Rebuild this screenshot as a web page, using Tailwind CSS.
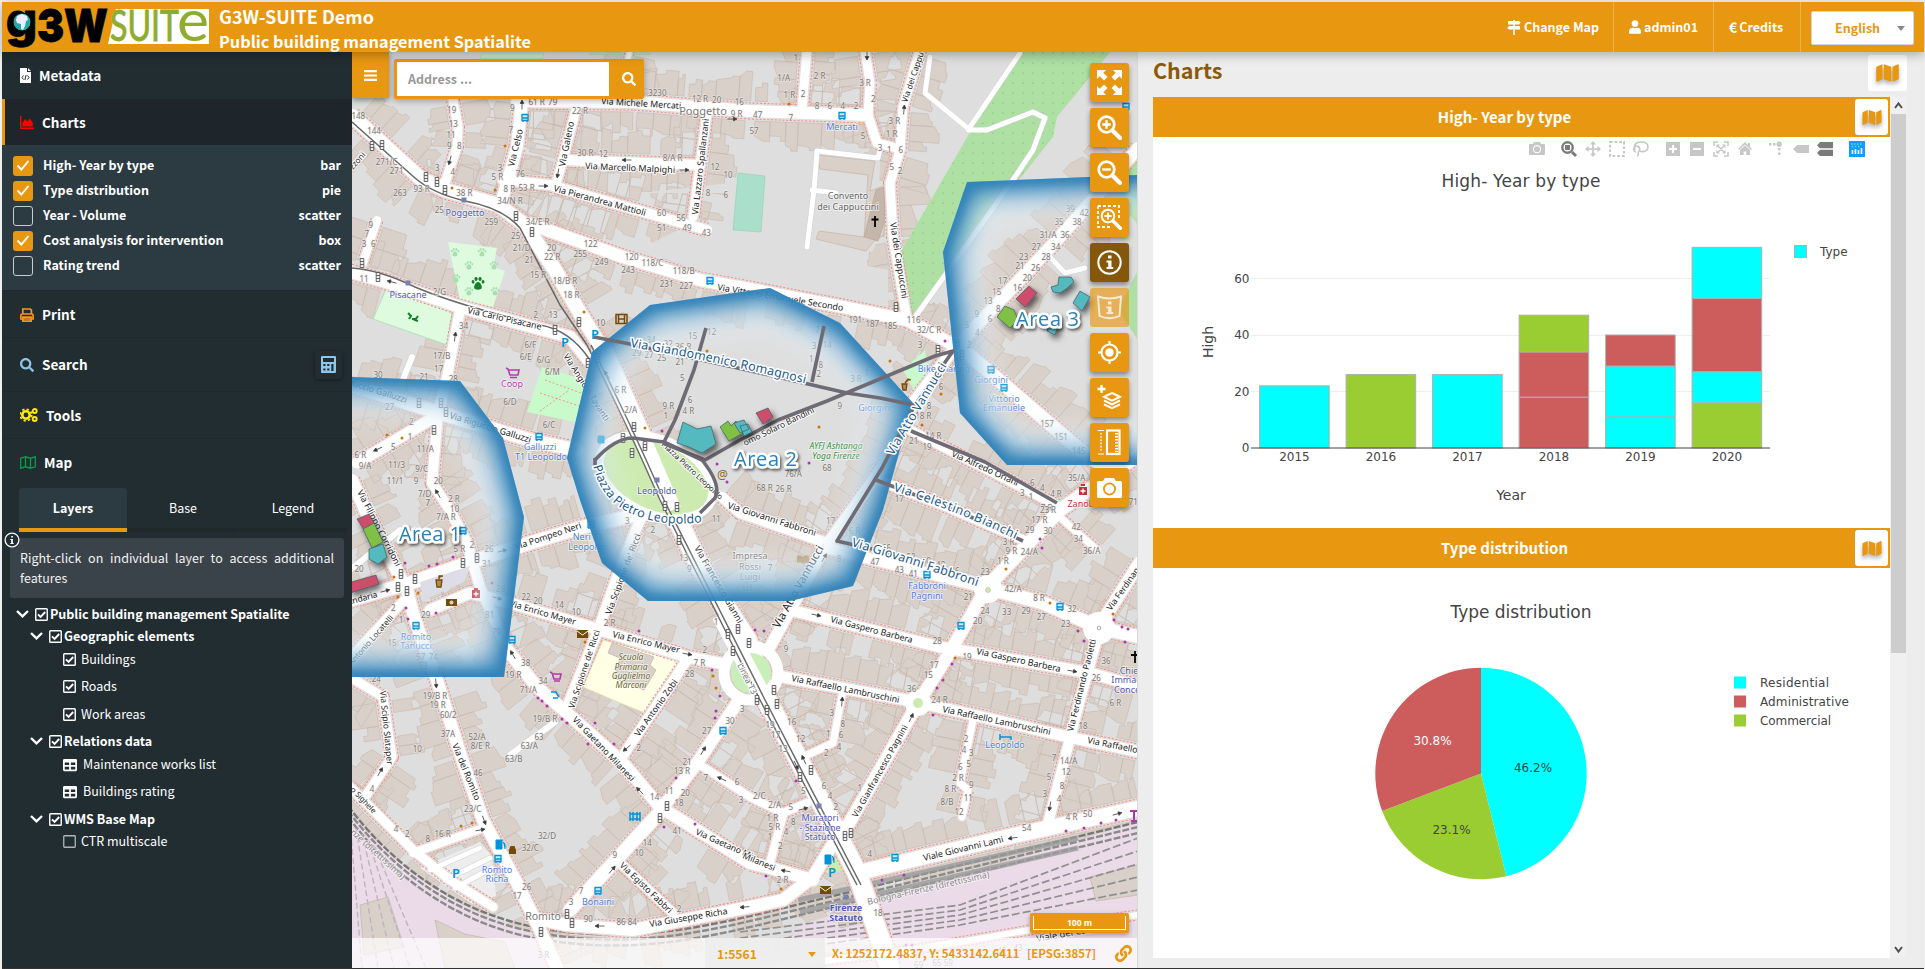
<!DOCTYPE html>
<html lang="en">
<head>
<meta charset="utf-8">
<title>G3W-SUITE Demo</title>
<script src="https://cdn.jsdelivr.net/npm/@tailwindcss/browser@4"></script>
</head>
<body class="w-[1925px] h-[969px] overflow-hidden bg-[#f0f0f0] pt-[2px] pl-[2px] pr-[1px] font-['Noto_Sans_CJK_SC','Source_Sans_Pro',sans-serif] text-[12.5px] text-white">
<svg width="0" height="0" class="absolute">
  <defs>
    <symbol id="i-search" viewBox="0 0 512 512"><path d="M505 442.7L405.3 343c-4.5-4.5-10.6-7-17-7H372c27.6-35.3 44-79.7 44-128C416 93.1 322.9 0 208 0S0 93.1 0 208s93.1 208 208 208c48.3 0 92.7-16.4 128-44v16.3c0 6.4 2.5 12.5 7 17l99.7 99.7c9.4 9.4 24.6 9.4 33.9 0l28.3-28.3c9.4-9.4 9.4-24.6.1-34zM208 336c-70.7 0-128-57.2-128-128 0-70.7 57.2-128 128-128 70.7 0 128 57.2 128 128 0 70.7-57.2 128-128 128z"/></symbol>
    <symbol id="i-user" viewBox="0 0 448 512"><path d="M224 256c70.7 0 128-57.3 128-128S294.7 0 224 0 96 57.3 96 128s57.3 128 128 128zm89.600 32h-16.700c-22.200 10.200-46.900 16-72.900 16s-50.600-5.800-72.900-16h-16.700C60.200 288 0 348.200 0 422.400V464c0 26.500 21.500 48 48 48h352c26.500 0 48-21.500 48-48v-41.600c0-74.200-60.200-134.400-134.400-134.400z"/></symbol>
    <symbol id="i-map" viewBox="0 0 576 512"><path d="M0 117.660v346.320c0 11.320 11.430 19.060 21.940 14.860L160 416V32L20.120 87.950A32 32 0 0 0 0 117.660zM192 416l192 64V96L192 32v384zM554.060 33.160L416 96v384l139.880-55.950A32 32 0 0 0 576 394.340V48.020c0-11.320-11.430-19.060-21.940-14.860z"/></symbol>
    <symbol id="i-table" viewBox="0 0 512 512"><path d="M464 32H48C21.490 32 0 53.490 0 80v352c0 26.510 21.490 48 48 48h416c26.510 0 48-21.490 48-48V80c0-26.510-21.490-48-48-48zM224 416H64v-96h160v96zm0-160H64v-96h160v96zm224 160H288v-96h160v96zm0-160H288v-96h160v96z"/></symbol>
    <symbol id="i-link" viewBox="0 0 512 512"><path d="M326.612 185.391c59.747 59.809 58.927 155.698.36 214.590-.11.12-.24.25-.36.37l-67.200 67.200c-59.270 59.270-155.699 59.262-214.960 0-59.270-59.260-59.270-155.700 0-214.960l37.106-37.106c9.840-9.840 26.786-3.300 27.294 10.606.648 17.722 3.826 35.527 9.690 52.721 1.986 5.822.567 12.262-3.783 16.612l-13.087 13.087c-28.026 28.026-28.905 73.660-1.155 101.960 28.024 28.579 74.086 28.749 102.325.51l67.200-67.190c28.191-28.191 28.073-73.757 0-101.830-3.701-3.694-7.429-6.564-10.341-8.569a16.037 16.037 0 0 1-6.947-12.606c-.396-10.567 3.348-21.456 11.698-29.806l21.054-21.055c5.521-5.521 14.182-6.199 20.584-1.731a152.482 152.482 0 0 1 20.522 17.197zM467.547 44.449c-59.261-59.262-155.690-59.270-214.960 0l-67.200 67.200c-.12.12-.25.25-.36.37-58.566 58.892-59.387 154.781.36 214.590a152.454 152.454 0 0 0 20.521 17.196c6.402 4.468 15.064 3.789 20.584-1.731l21.054-21.055c8.350-8.350 12.094-19.239 11.698-29.806a16.037 16.037 0 0 0-6.947-12.606c-2.912-2.005-6.640-4.875-10.341-8.569-28.073-28.073-28.191-73.639 0-101.830l67.200-67.190c28.239-28.239 74.300-28.069 102.325.51 27.750 28.300 26.872 73.934-1.155 101.960l-13.087 13.087c-4.350 4.350-5.769 10.790-3.783 16.612 5.864 17.194 9.042 34.999 9.690 52.721.509 13.906 17.454 20.446 27.294 10.606l37.106-37.106c59.271-59.259 59.271-155.699.001-214.959z"/></symbol>
    <symbol id="i-on" viewBox="0 0 13 13"><rect x=".75" y=".75" width="11.500" height="11.500" rx=".8" fill="none" stroke="currentColor" stroke-width="1.400"/><path d="M3 6.300l2.600 2.600L10.200 4" fill="none" stroke="currentColor" stroke-width="1.900"/></symbol>
    <symbol id="i-off" viewBox="0 0 13 13"><rect x=".75" y=".75" width="11.500" height="11.500" rx=".8" fill="none" stroke="currentColor" stroke-width="1.300"/></symbol>
    <symbol id="i-chev" viewBox="0 0 13 8"><path d="M1 1l5.500 5.300L12 1" fill="none" stroke="currentColor" stroke-width="2.400"/></symbol>
    <symbol id="i-tick" viewBox="0 0 14 11"><path d="M1.500 5.500l3.800 4L12.500 1" fill="none" stroke="#fff" stroke-width="1.900"/></symbol>
    <symbol id="i-cam" viewBox="0 0 25 20"><path d="M8 0h9l2 3h4.500A1.500 1.500 0 0 1 25 4.500v14a1.500 1.500 0 0 1-1.500 1.500h-22A1.500 1.500 0 0 1 0 18.500v-14A1.500 1.500 0 0 1 1.500 3H6z"/><circle cx="12.500" cy="11" r="5.600" fill="none" stroke="var(--hole)" stroke-width="1.800"/></symbol>
  </defs>
</svg>

<!-- header -->
<header class="relative z-30 flex h-[50px] items-stretch bg-[#e89711] shadow-[0_3px_10px_rgba(0,0,0,0.28)]">
  <svg class="ml-[4px] shrink-0" width="206" height="50" viewBox="6 2 206 50">
    <path d="M116 9H209V44H108z" fill="#fff"/>
    <g font-family="Inter" font-weight="900" fill="#000" stroke="#000" stroke-width=".8">
      <text x="6" y="37" font-size="47" textLength="31" lengthAdjust="spacingAndGlyphs">g</text>
      <text x="37" y="42" font-size="46" textLength="71" lengthAdjust="spacingAndGlyphs">3W</text>
    </g>
    <circle cx="22" cy="22" r="9" fill="#22a9a8" stroke="#000" stroke-width="1"/>
    <path d="M17 16l5-2 5 2 1 4-2 1-1 5-2 4-2-1 0-5-4-1-1-3z" fill="#eef"/>
    <g font-family="Lato" fill="#90ac2e" stroke="#90ac2e" stroke-width=".9">
      <text x="110" y="41" font-size="43" textLength="69" lengthAdjust="spacingAndGlyphs">SUIT</text>
      <text x="177" y="41" font-size="59" textLength="32" lengthAdjust="spacingAndGlyphs" stroke="none">e</text>
    </g>
  </svg>
  <div class="ml-[7px] flex flex-col whitespace-nowrap font-bold">
    <span class="text-[18px] leading-[29px]">G3W-SUITE Demo</span>
    <span class="text-[16.300px] leading-[21px]">Public building management Spatialite</span>
  </div>
  <nav class="ml-auto flex font-bold leading-[50px]">
    <div class="flex w-[121px] items-center gap-[3px] border-r border-white/25 pl-[14px]">
      <svg width="14" height="15" viewBox="0 0 14 15" fill="#fff"><path d="M6.200 0h1.600v1H12l1.700 1.700L12 4.500H1V1h5.200zM2 6h11v3.500H2L.3 7.800zM6.200 4h1.600v11H6.200z"/></svg>Change Map</div>
    <div class="flex w-[100px] items-center gap-[3px] border-r border-white/25 pl-[15px]">
      <svg width="12" height="14" fill="#fff"><use href="#i-user"/></svg>admin01</div>
    <div class="flex w-[87px] items-center gap-[2px] border-r border-white/25 pl-[15px]">
      <span class="text-[14px]">€</span>Credits</div>
    <div class="mt-[9px] ml-[10px] mr-[10px] flex h-[34px] w-[103px] items-center rounded-[2px] border border-[#d2d6de] bg-white pl-[23px] text-[#e89711] leading-[32px]">English
      <svg class="ml-[17px]" width="8" height="5"><path d="M0 0h8L4 5z" fill="#888"/></svg></div>
  </nav>
</header>

<div class="flex h-[916px]">
  <!-- sidebar -->
  <aside class="relative h-full w-[350px] shrink-0 bg-[#222d32]">
    <div class="flex h-[47px] items-center gap-[8px] pl-[18px] text-[13.500px] font-bold">
      <svg width="11" height="15" viewBox="0 0 11 15"><path d="M0 0h7v4h4v11H0zM8 0l3 3H8z" fill="#fff"/><path d="M3.500 7.500L2 9.500l1.500 2M7.500 7.500l1.500 2-1.500 2M6.100 7l-1.200 5" fill="none" stroke="#222d32"/></svg>
      <span>Metadata</span></div>
    <div class="flex h-[46px] items-center gap-[8px] border-l-[3px] border-[#e89711] bg-[#1e252b] pt-[1px] pl-[15px] text-[13.500px] font-bold">
      <svg width="14" height="13" viewBox="0 0 14 13"><path d="M0 0h1.400v11.400H14V13H0zM2.400 10.500V7l2.600-4 2.400 2.600 2.300-3 3 4v3.900z" fill="#f00"/></svg>
      <span>Charts</span></div>
    <div class="flex h-[145px] flex-col bg-[#2c3b41] pt-[8px] pr-[11px] pl-[11px] font-bold">
      <div class="flex h-[25px] items-center"><span class="mr-[10px] flex size-5 items-center justify-center rounded-[3px] bg-[#e89711]"><svg width="14" height="11"><use href="#i-tick"/></svg></span>High- Year by type<span class="ml-auto">bar</span></div>
      <div class="flex h-[25px] items-center"><span class="mr-[10px] flex size-5 items-center justify-center rounded-[3px] bg-[#e89711]"><svg width="14" height="11"><use href="#i-tick"/></svg></span>Type distribution<span class="ml-auto">pie</span></div>
      <div class="flex h-[25px] items-center"><span class="mr-[10px] size-5 rounded-[3px] border border-[#c8cdd0]"></span>Year - Volume<span class="ml-auto">scatter</span></div>
      <div class="flex h-[25px] items-center"><span class="mr-[10px] flex size-5 items-center justify-center rounded-[3px] bg-[#e89711]"><svg width="14" height="11"><use href="#i-tick"/></svg></span>Cost analysis for intervention<span class="ml-auto">box</span></div>
      <div class="flex h-[25px] items-center"><span class="mr-[10px] size-5 rounded-[3px] border border-[#c8cdd0]"></span>Rating trend<span class="ml-auto">scatter</span></div>
    </div>
    <div class="flex h-[48px] items-center gap-[8px] border-y border-[#1f282c] pl-[18px] pt-[1px] text-[13.500px] font-bold">
      <svg width="14" height="14" viewBox="0 0 14 14"><path d="M2.800 6V1h7.400l1.200 1.200V6M.9 11V7.500Q.9 6 2.200 6h9.600q1.300 0 1.300 1.500V11zM2.900 9.200h8.200v4H2.900z" fill="none" stroke="#f8961d" stroke-width="1.700"/></svg>
      <span>Print</span></div>
    <div class="flex h-[54px] items-center gap-[8px] border-b border-[#1f282c] pl-[18px] text-[13.500px] font-bold">
      <svg width="14" height="14" fill="#8fc5e8"><use href="#i-search"/></svg>
      <span>Search</span>
      <span class="mr-[10px] ml-auto flex h-[28px] w-[27px] items-center justify-center rounded-[3px] shadow-[0_1px_4px_rgba(0,0,0,0.45)]"><svg width="15" height="17" viewBox="0 0 15 17"><path fill-rule="evenodd" d="M1 0h13q1 0 1 1v15q0 1-1 1H1q-1 0-1-1V1q0-1 1-1zM2 2v4h11V2zM2.300 8h2.200v2H2.300zM6.200 8h2.200v2H6.200zM10.300 8h2.200v7h-2.200zM2.300 12.500h2.200v2H2.300zM6.200 12.500h2.200v2H6.200z" fill="#8fc5e8"/></svg></span></div>
    <div class="flex h-[47px] items-center gap-[8px] border-b border-[#1f282c] pl-[18px] text-[13.500px] font-bold">
      <svg width="18" height="14" viewBox="0 0 18 14" fill="none" stroke="#fde910"><circle cx="6" cy="7" r="3.700" stroke-width="2.600"/><circle cx="6" cy="7" r="5.800" stroke-width="1.700" stroke-dasharray="2.300 2.250"/><circle cx="14.700" cy="3" r="2" stroke-width="1.900"/><circle cx="14.700" cy="11" r="2" stroke-width="1.900"/></svg>
      <span>Tools</span></div>
    <div class="flex h-[47px] items-center gap-[8px] pl-[18px] text-[13.500px] font-bold">
      <svg width="16" height="13" viewBox="0 0 16 13"><path d="M.7 2.200L5.500.8l5 1.400L15.300.8v10l-4.800 1.400-5-1.400-4.800 1.400zM5.500.8v10M10.500 2.200v10" fill="none" stroke="#0a9b4c" stroke-width="1.300"/></svg>
      <span>Map</span></div>
    <div class="mt-[2px] ml-[17px] flex h-[44px] w-[328px] gap-[1px] text-center leading-[40px]">
      <div class="w-[108px] rounded-t-[4px] border-b-4 border-[#e89711] bg-[#2c3b41] font-bold">Layers</div>
      <div class="w-[110px] border-b-4 border-[#1f282b]">Base</div>
      <div class="w-[108px] border-b-4 border-[#1f282b]">Legend</div>
    </div>
    <div class="relative mt-[6px] ml-[8px] h-[60px] w-[334px] rounded-[3px] bg-[#3a434a] px-[10px] pt-[10px] text-justify leading-[20px] text-[#f2f2f2]">Right-click on individual layer to access additional features
      <svg class="absolute -top-[6px] -left-[6px]" width="16" height="16" viewBox="0 0 16 16"><circle cx="8" cy="8" r="6.900" fill="#222d32" stroke="#fff" stroke-width="1.300"/><path d="M7.200 4h1.700v1.600H7.200zM6.300 7h2.600v4h.8v1H6.300v-1h.9V8h-.9z" fill="#fff"/></svg>
    </div>
    <div class="flex flex-col whitespace-nowrap pt-[5px]">
      <div class="flex h-[22px] items-center pl-[14px] font-bold"><svg class="mr-[6px]" width="13" height="8"><use href="#i-chev"/></svg><svg class="mr-[2px]" width="13" height="13"><use href="#i-on"/></svg>Public building management Spatialite</div>
      <div class="flex h-[22px] items-center pl-[28px] font-bold"><svg class="mr-[6px]" width="13" height="8"><use href="#i-chev"/></svg><svg class="mr-[2px]" width="13" height="13"><use href="#i-on"/></svg>Geographic elements</div>
      <div class="flex h-[25px] items-center pl-[61px]"><svg class="mr-[5px]" width="13" height="13"><use href="#i-on"/></svg>Buildings</div>
      <div class="flex h-[28px] items-center pl-[61px]"><svg class="mr-[5px]" width="13" height="13"><use href="#i-on"/></svg>Roads</div>
      <div class="flex h-[28px] items-center pl-[61px]"><svg class="mr-[5px]" width="13" height="13"><use href="#i-on"/></svg>Work areas</div>
      <div class="flex h-[26px] items-center pl-[28px] font-bold"><svg class="mr-[6px]" width="13" height="8"><use href="#i-chev"/></svg><svg class="mr-[2px]" width="13" height="13"><use href="#i-on"/></svg>Relations data</div>
      <div class="flex h-[21px] items-center pl-[61px]"><svg class="mr-[6px]" width="14" height="14" fill="#fff"><use href="#i-table"/></svg>Maintenance works list</div>
      <div class="flex h-[33px] items-center pl-[61px]"><svg class="mr-[6px]" width="14" height="14" fill="#fff"><use href="#i-table"/></svg>Buildings rating</div>
      <div class="flex h-[22px] items-center pl-[28px] font-bold"><svg class="mr-[6px]" width="13" height="8"><use href="#i-chev"/></svg><svg class="mr-[2px]" width="13" height="13"><use href="#i-on"/></svg>WMS Base Map</div>
      <div class="flex h-[22px] items-center pl-[61px]"><svg class="mr-[5px] text-[#b0b5b8]" width="13" height="13"><use href="#i-off"/></svg>CTR multiscale</div>
    </div>
  </aside>

  <!-- map -->
  <main class="relative h-full w-[785px] shrink-0 overflow-hidden bg-[#dedede]">
    <svg id="map" class="absolute inset-0" width="786" height="916" viewBox="352 52 786 916" font-family="Noto Sans">
      <defs>
        <filter id="blur" x="-30%" y="-30%" width="160%" height="160%"><feGaussianBlur stdDeviation="13"/></filter>
        <filter id="drop" x="-50%" y="-50%" width="200%" height="200%"><feDropShadow dx="3" dy="4" stdDeviation="3" flood-opacity=".6"/></filter>
        <pattern id="dots" width="10" height="10" patternUnits="userSpaceOnUse"><rect width="10" height="10" fill="#aedfa3"/><circle cx="3" cy="3" r=".5" fill="#5f9b5d"/></pattern>
      </defs>
      <g id="buildings" fill="#d9d0c9" stroke="#c8b9ae" stroke-width=".6"></g>
      <g id="greens">
        <path d="M1020 50H1112L1057 117 1053 137 910 317 902 250 973 127z" fill="url(#dots)"/>
        <path d="M1138 155l-30 30 30 40zM1138 270l-20 40 20 30z" fill="#aedfa3"/>
        <path d="M738 173l27 3-4 56-28-2z" fill="#aae0cb" stroke="#8fd0b5" stroke-width=".6"/>
        <path d="M448 242l49 6-4 19 12 4-12 36-33-7z" fill="#defbe0"/>
        <path d="M387 287l65 25-5 33-74-26z" fill="#defbe0" stroke="#9fdca4" stroke-width=".7"/>
        <path d="M542 367l44 13-6 43-53-11z" fill="#c8facc"/>
        <path d="M545 380l36 13M540 393l42 14M540 411l28-20" stroke="#fa8072" stroke-width=".8" stroke-dasharray="2 2"/>
        <path d="M482 53h62l-2 6h-62zM590 53h60v1.500h-60z" fill="#c8efcf" stroke="#a9d9b3" stroke-width=".6"/>
        <path d="M603 640l77 20-35 53-25-10-37-16z" fill="#ffffe5" stroke="#e0d9a0" stroke-width=".7"/>
        <path d="M612 643l42 14-4 8 6 5-12 20-30-12 6-20-12-5z" fill="#d9d0c9" stroke="#c4b3a7" stroke-width=".7"/>
        <path d="M352 812C390 862 450 912 545 935L560 968H352z" fill="#ebdbe8"/>
        <path d="M800 925L1138 822V968H770z" fill="#ebdbe8"/>
        <path d="M1090 877l48-12v30l-42 6zM836 914l40-12 4 16-40 10zM360 905l28-8 16 50-40 8zM435 920l30 14 40 8 10 26h-70z" fill="#d9d0c9" stroke="#c4b3a7" stroke-width=".7"/>
        <path d="M420 868l60-26 12 14 4 40-24 8z" fill="#ededed"/>
        <path d="M640 193h90v-10zM738 240l150 30 0 40-190-40-60-20 40-20z" fill="#dedede"/>
        <path d="M830 150l50 10-2 80-6 12-58-12 3-55z" fill="#dedede"/>
        <path d="M817 155l58 6-5 30 16-6-2 50-10 6-8 10-50-12 3-8 45 6 4-62-48-6z" fill="#d9d0c9" stroke="#c4b3a7" stroke-width=".7"/>
        <path d="M876 190l9-3-1 36-6 18-14-4z" fill="#c4b6ab" stroke="#b3a293" stroke-width=".6"/>
        <path d="M925 350l-22 20 15 28 12-3z" fill="#c8facc"/>
        <path d="M825 848l18 0 6 22-28 4z" fill="#cdebb0"/>
        <path d="M519 226l6 0 50 84-5 4z" fill="#c5e8a8"/>
      </g>
      <g id="rails" fill="none"></g>
      <g id="streets" fill="none" stroke-linejoin="round" stroke-linecap="round"></g>
      <g fill="none">
        <ellipse cx="656" cy="477" rx="60" ry="37" transform="rotate(24 656 477)" fill="#cdebb0" stroke="#fff" stroke-width="9"/>
        <path d="M603 350L640 433 673 510" stroke="#fff" stroke-width="17"/>
        <circle cx="751" cy="673" r="27" stroke="#fff" stroke-width="11"/><circle cx="751" cy="673" r="20" fill="#c8efb8"/>
        <path d="M720 615l50 95" stroke="#fff" stroke-width="17"/>
        <circle cx="918" cy="703" r="13" fill="#fff"/><circle cx="918" cy="703" r="5" fill="#cdebb0"/>
        <circle cx="988" cy="589" r="14" fill="#fff"/><circle cx="988" cy="590" r="2.500" fill="#cdebb0" stroke="#aaa" stroke-width=".5"/>
        <circle cx="1099" cy="628" r="16" fill="#fff"/><circle cx="1099" cy="628" r="1.800" stroke="#888" stroke-width=".7"/>
        <path d="M420 582l50-16-6 16-40 18z" fill="#dddde8"/>
        <path d="M352 122L415 178Q432 193 465 201 503 208 520 228L560 305 587 345M352 268Q380 270 415 287 460 306 540 325 570 330 590 360" stroke="#666" stroke-width="1.500"/>
        <path d="M587 345Q625 420 660 500L760 700 857 885M591 345Q629 420 664 500L764 698 861 885" stroke="#6b6b6b" stroke-width="1.500"/>
      </g>
      <g id="numbers" font-size="8" fill="#7d7671" text-anchor="middle" stroke="#eee" stroke-opacity=".6" stroke-width="1.500" paint-order="stroke"></g>
      <g id="names" fill="#222" stroke="#fff" stroke-width="2" paint-order="stroke" stroke-linejoin="round"></g>
      <g id="signals" fill="none" stroke="#444" stroke-width=".8"></g>
      <g id="pins"></g>
      <g id="places" font-size="9" text-anchor="middle" stroke="#fff" stroke-opacity=".7" stroke-width="1.500" paint-order="stroke"></g>
      <g id="zones"></g>
      <g fill="none" stroke="#6f6b75" stroke-width="3.600" stroke-linejoin="round">
        <path d="M594 337L630 344 760 373 847 393 880 398 914 405M706 328L694 370 675 420 664 442M824 326L812 382M663 443L705 460 740 440 778 420 827 401 935 356 953 351 915 405 882 468 837 541 890 553M595 460Q615 438 633 438L664 442 702 460Q722 485 715 498L700 513M595 458V465M911 431L985 462 1057 503M876 480L960 512 1023 541"/>
      </g>
      <g filter="url(#drop)" stroke="#3c5b60" stroke-width=".7">
        <path d="M683 422l14 7 14-3 5 18-14 9-13-6-12-4z" fill="#54b9c0"/>
        <path d="M720 427l8-6 3 5 5-5 7 12-14 8z" fill="#7fc044"/><path d="M734 423l10-3 5 9-9 4zM740 426l8-2 4 8-8 4z" fill="#54b9c0"/>
        <path d="M756 413l12-5 5 9-10 7z" fill="#ce4e6d"/>
        <path d="M357 519l12-5 5 9-10 7z" fill="#ce4e6d"/><path d="M363 529l11-6 9 19-11 6z" fill="#7fc044"/><path d="M369 549l14-5 4 13-9 7-9-5z" fill="#54b9c0"/>
        <path d="M348 583l28-8 3 9-29 9z" fill="#ce4e6d"/>
        <path d="M1016 299l13-13 8 7-12 14z" fill="#ce4e6d"/><path d="M997 317l8-11 9 4 4 10-8 8z" fill="#7fc044"/>
        <path d="M1051 287l7-2 1-8 12 0 3 5-8 7-6 4-7-1z" fill="#54b9c0"/><path d="M1073 303l7-12 10 6-8 14zM1048 325l5-7 6 5-4 12-8-4z" fill="#54b9c0"/>
      </g>
      <g id="tops" fill="#1d5a8a" stroke="#fff" stroke-width="3" paint-order="stroke" stroke-linejoin="round"></g>
      <g font-family="Open Sans, Noto Sans" font-size="20" font-weight="500" fill="#2b80bd" stroke="#fff" stroke-width="5" paint-order="stroke" stroke-linejoin="round" filter="url(#lbl)">
        <text x="399" y="541" textLength="62">Area 1</text><text x="734" y="466" textLength="63">Area 2</text><text x="1016" y="326" textLength="63">Area 3</text>
      </g>
    </svg>

    <div class="absolute top-0 left-0 flex h-[46px] w-[37px] items-center justify-center bg-[#e89711] shadow-[0_2px_6px_rgba(0,0,0,0.45)]">
      <svg width="13" height="11"><path d="M0 1.200h13M0 5.500h13M0 9.800h13" stroke="#fff" stroke-width="2.200"/></svg></div>
    <div class="absolute top-[7px] left-[42px] flex h-[40px] w-[250px] items-center rounded-[2px] border-[3px] border-[#e89711] bg-[#e89711] shadow-[0_2px_6px_rgba(0,0,0,0.3)]">
      <div class="h-[34px] w-[212px] bg-white pl-[11px] text-[12.500px] leading-[34px] font-bold text-[#999]">Address ...</div>
      <svg class="ml-[13px]" width="14" height="14" fill="#fff"><use href="#i-search"/></svg>
    </div>

    <div class="absolute top-[11px] left-[738px] flex flex-col gap-[6px] [--hole:#e89711]">
      <div class="flex size-[39px] items-center justify-center rounded-[3px] bg-[#e89711] shadow-[0_3px_5px_rgba(0,0,0,0.4)]"><svg width="25" height="25" viewBox="0 0 25 25" fill="#fff"><path d="M0 0h9L6.300 2.700 10.500 7 7 10.500 2.700 6.300 0 9z"/><path d="M0 0h9L6.300 2.700 10.500 7 7 10.500 2.700 6.300 0 9z" transform="matrix(-1 0 0 1 25 0)"/><path d="M0 0h9L6.300 2.700 10.500 7 7 10.500 2.700 6.300 0 9z" transform="matrix(1 0 0 -1 0 25)"/><path d="M0 0h9L6.300 2.700 10.500 7 7 10.500 2.700 6.300 0 9z" transform="matrix(-1 0 0 -1 25 25)"/></svg></div>
      <div class="flex size-[39px] items-center justify-center rounded-[3px] bg-[#e89711] shadow-[0_3px_5px_rgba(0,0,0,0.4)]"><svg width="25" height="25" viewBox="0 0 25 25" fill="none" stroke="#fff"><circle cx="9.500" cy="9.500" r="7.800" stroke-width="2.700"/><path d="M9.500 5.200v8.600M5.200 9.500h8.600" stroke-width="2.400"/><path d="M15.500 15.500L23 23" stroke-width="4.200" stroke-linecap="round"/></svg></div>
      <div class="flex size-[39px] items-center justify-center rounded-[3px] bg-[#e89711] shadow-[0_3px_5px_rgba(0,0,0,0.4)]"><svg width="25" height="25" viewBox="0 0 25 25" fill="none" stroke="#fff"><circle cx="9.500" cy="9.500" r="7.800" stroke-width="2.700"/><path d="M5.200 9.500h8.600" stroke-width="2.400"/><path d="M15.500 15.500L23 23" stroke-width="4.200" stroke-linecap="round"/></svg></div>
      <div class="flex size-[39px] items-center justify-center rounded-[3px] bg-[#e89711] shadow-[0_3px_5px_rgba(0,0,0,0.4)]"><svg width="25" height="25" viewBox="0 0 25 25" fill="none" stroke="#fff"><path d="M1 1h21v12M1 1v21h12" stroke-width="1.800" stroke-dasharray="3 2"/><circle cx="11" cy="11" r="6.300" stroke-width="2"/><path d="M11 7.500v7M7.500 11h7" stroke-width="1.900"/><path d="M16 16l7.300 7.300" stroke-width="3.600" stroke-linecap="round"/></svg></div>
      <div class="flex size-[39px] items-center justify-center rounded-[3px] bg-[#85570a] shadow-[0_3px_5px_rgba(0,0,0,0.4)]"><svg width="25" height="25" viewBox="0 0 25 25"><circle cx="12.500" cy="12.500" r="11.200" fill="none" stroke="#fff" stroke-width="2"/><path d="M11 5.500h3.500v3H11zM9.500 10.500h5v6.500h1.700v2H9.500v-2h1.700v-4.500H9.500z" fill="#fff"/></svg></div>
      <div class="flex size-[39px] items-center justify-center rounded-[3px] bg-[#e89711]/65"><svg class="opacity-75" width="25" height="25" viewBox="0 0 25 25"><path d="M1 1.500Q12.500 5.500 24 1.500L22.500 21Q12.500 25.500 2.500 21z" fill="none" stroke="#fff" stroke-width="1.900"/><path d="M11 6.500h3.500v3H11zM9.500 11.500h5V17h1.700v2H9.500v-2h1.700v-3.500H9.500z" fill="#fff"/></svg></div>
      <div class="flex size-[39px] items-center justify-center rounded-[3px] bg-[#e89711] shadow-[0_3px_5px_rgba(0,0,0,0.4)]"><svg width="25" height="25" viewBox="0 0 25 25" fill="none" stroke="#fff" stroke-width="2.200"><circle cx="12.500" cy="12.500" r="8"/><circle cx="12.500" cy="12.500" r="4.200" fill="#fff" stroke="none"/><path d="M12.500 1v4M12.500 20v4M1 12.500h4M20 12.500h4"/></svg></div>
      <div class="flex size-[39px] items-center justify-center rounded-[3px] bg-[#e89711] shadow-[0_3px_5px_rgba(0,0,0,0.4)]"><svg width="25" height="25" viewBox="0 0 25 25" fill="none" stroke="#fff" stroke-width="2"><path d="M4.500 0v8M.5 4h8" stroke-width="2.400"/><path d="M15 8l8 3.800-8 3.800-8-3.800zM7 15.500l8 3.800 8-3.800M7 19.300l8 3.800 8-3.800"/></svg></div>
      <div class="flex size-[39px] items-center justify-center rounded-[3px] bg-[#e89711] shadow-[0_3px_5px_rgba(0,0,0,0.4)]"><svg width="25" height="27" viewBox="0 0 25 27" fill="none" stroke="#fff"><rect x="10" y="1.500" width="12.500" height="23.500" stroke-width="2.200"/><path d="M19.500 4v19" stroke-width="3" stroke-dasharray="1.600 1.400"/><path d="M1 1.500h6M1 25h6" stroke-width="1.200"/><path d="M4 4v19" stroke-width="1.600" stroke-dasharray="1.600 1.600"/></svg></div>
      <div class="flex size-[39px] items-center justify-center rounded-[3px] bg-[#e89711] shadow-[0_3px_5px_rgba(0,0,0,0.4)]"><svg width="25" height="20" fill="#fff"><use href="#i-cam"/></svg></div>
    </div>

    <div class="absolute top-[861px] left-[678px] flex h-[20px] w-[99px] rounded-[2px] bg-[#e89711] p-[3px] shadow-[0_2px_5px_rgba(0,0,0,0.35)]"><div class="flex-1 border border-t-0 border-white text-center font-['Open_Sans',sans-serif] text-[8.500px] leading-[14px] font-bold">100 m</div></div>

    <div class="absolute bottom-0 left-0 flex h-[30px] w-full items-center bg-white/70 pl-[353px] text-[11.400px] font-bold whitespace-nowrap text-[#e89711]">
      <div class="flex h-full w-[120px] items-center bg-[#ededed]/90 pt-[2px] pl-[12px]"><span class="w-[91px] text-[12.200px]">1:5561</span><svg width="8" height="5"><path d="M0 0h8L4 5z" fill="#e89711"/></svg></div>
      <span class="ml-[7px] w-[195px] pt-[2px]">X: 1252172.4837, Y: 5433142.6411</span><span class="w-[88px] pt-[2px]">[EPSG:3857]</span>
      <svg width="17" height="17" fill="#e89711"><use href="#i-link"/></svg>
    </div>
  </main>

  <!-- charts panel -->
  <section class="h-full w-[787px] border-l border-[#d9d9d9] bg-[#ededed] pl-[15px]">
    <div class="flex h-[45px] items-start justify-between pr-[17px]">
      <h3 class="text-[21.500px] leading-[36px] font-bold text-[#8a5a0b]">Charts</h3>
      <div class="mt-[3px] flex h-[36px] w-[39px] items-center justify-center rounded-[3px] bg-white"><svg width="23" height="20" fill="#e89711" class="drop-shadow-[0_3px_2px_rgba(0,0,0,0.3)]"><use href="#i-map"/></svg></div>
    </div>
    <div class="flex h-[861px] w-[753px]">
      <div class="h-full w-[737px] bg-white">
        <div class="relative flex h-[40px] items-center justify-end bg-[#e89711] pr-[2px] text-[15px] font-bold"><span class="w-[702px] -mr-[0px] pl-[1px] text-center">High- Year by type</span>
          <span class="flex h-[36px] w-[33px] items-center justify-center rounded-[3px] bg-white"><svg width="20" height="17" fill="#e89711" class="drop-shadow-[0_3px_2px_rgba(0,0,0,0.3)]"><use href="#i-map"/></svg></span></div>
        <svg class="block" width="737" height="391" viewBox="1153 137 737 391" font-family="DejaVu Sans" font-size="12" fill="#444">
          <g fill="#c7c7c7" stroke="none" style="--hole:#fff">
            <svg x="1529" y="142" width="16" height="13"><use href="#i-cam"/></svg>
            <g fill="none" stroke="#7b7b7b"><circle cx="1567.500" cy="147.500" r="5.200" stroke-width="2.400"/><path d="M1572 152l4 4" stroke-width="3"/><rect x="1565" y="145" width="5" height="5" fill="#7b7b7b" stroke="none"/></g>
            <g fill="none" stroke="#c7c7c7" stroke-width="1.700"><path d="M1593 143v12M1587 149h12"/></g>
            <path d="M1593 141l3 3.500h-6zM1593 157l3-3.500h-6zM1585 149l3.500-3v6zM1601 149l-3.500-3v6z"/>
            <rect x="1610" y="142" width="14" height="14" fill="none" stroke="#c7c7c7" stroke-width="2" stroke-dasharray="2.600 2"/>
            <path d="M1636 152a3 3 0 1 1 3-1c6 2 9-1 9-4 0-4-3-5-7-5-5 0-8 3-6 8M1638 152c1 2 0 4-1 4" fill="none" stroke="#c7c7c7" stroke-width="1.600"/>
            <path d="M1666 142h14v14h-14zM1690 142h14v14h-14z"/><path d="M1669 149h8M1673 145v8M1693 149h8" stroke="#fff" stroke-width="2.200"/>
            <path d="M1714 146v-4h4M1724 142h4v4M1728 152v4h-4M1718 156h-4v-4M1717 145l8 8M1725 145l-8 8" fill="none" stroke="#c7c7c7" stroke-width="1.500"/><path d="M1716.500 144.500h3.500l-3.500 3.500zM1725.500 144.500v3.500l-3.500-3.500zM1725.500 153.500H1722l3.500-3.500zM1716.500 153.500V150l3.500 3.500z"/>
            <path d="M1738 149l7-7 3 3v-2h2v4l2 2-1 1-6-5.500-6 5.500zM1740 150l5-4.500 5 4.500v5h-3.700v-3.500h-2.600v3.500H1740z"/>
            <path d="M1769 143h2.500v2.500h-2.500zM1773 143h2.500v2.500h-2.500zM1778 148h2.500v2.500h-2.500zM1778 152.500h2.500v2.500h-2.500z"/><circle cx="1779.200" cy="144.200" r="2.600"/>
            <path d="M1793 149l4-4h12v8h-12z"/>
            <path d="M1817 145.500l3-3.500h13v6.200h-13zM1817 153l3-3.300h13v6.300h-13z" fill="#7b7b7b"/>
            <rect x="1849" y="141" width="16" height="16" fill="#119dff"/><path d="M1852.500 150v4M1855.500 149v5M1858.500 150v4M1861.500 148v6" stroke="#fff" stroke-width="1.600"/><path d="M1851 144h12M1852 146.500h9" stroke="#6df" stroke-width="1.300" stroke-dasharray="1.300 1.700"/>
          </g>
          <text x="1521" y="187" font-size="17" text-anchor="middle" textLength="159">High- Year by type</text>
          <path d="M1251 278.500h519M1251 335.500h519M1251 391.500h519" stroke="#eee"/>
          <g id="bars" stroke="#b0b0b0" stroke-width="1"></g>
          <path d="M1251 448h519" stroke="#444"/>
          <g text-anchor="end"><text x="1249.500" y="452">0</text><text x="1249.500" y="396">20</text><text x="1249.500" y="339">40</text><text x="1249.500" y="283">60</text></g>
          <text x="1511" y="500" font-size="14" text-anchor="middle">Year</text>
          <text transform="translate(1213 342) rotate(-90)" font-size="14" text-anchor="middle">High</text>
          <rect x="1794.500" y="245.500" width="12" height="12" fill="#0ff" stroke="#b0b0b0"/><text x="1820" y="256">Type</text>
        </svg>
        <div class="flex h-[40px] items-center justify-end bg-[#e89711] pr-[2px] text-[15px] font-bold"><span class="w-[702px] pl-[1px] text-center">Type distribution</span>
          <span class="flex h-[36px] w-[33px] items-center justify-center rounded-[3px] bg-white"><svg width="20" height="17" fill="#e89711" class="drop-shadow-[0_3px_2px_rgba(0,0,0,0.3)]"><use href="#i-map"/></svg></span></div>
        <svg class="block" width="737" height="390" viewBox="1153 568 737 390" font-family="DejaVu Sans" font-size="12" fill="#444">
          <text x="1521" y="618" font-size="17" text-anchor="middle" textLength="141">Type distribution</text>
          <g id="pie"></g>
          <text x="1533" y="772" text-anchor="middle">46.2%</text><text x="1432.500" y="745" text-anchor="middle" fill="#fff">30.8%</text><text x="1451.500" y="834" text-anchor="middle">23.1%</text>
          <path d="M1734 676.500h12v12h-12z" fill="#0ff"/><path d="M1734 695.500h12v12h-12z" fill="#cd5c5c"/><path d="M1734 714.500h12v12h-12z" fill="#9acd32"/>
          <text x="1760" y="687" textLength="69">Residential</text><text x="1760" y="706" textLength="89">Administrative</text><text x="1760" y="725" textLength="71">Commercial</text>
        </svg>
      </div>
      <div class="flex h-full w-[16px] flex-col bg-[#f0f0f0] pl-[1px]">
        <svg width="15" height="17"><path d="M4 11l3.500-4.500L11 11" fill="none" stroke="#505050" stroke-width="2"/></svg>
        <div class="h-[539px] bg-[#cdcdcd]"></div>
        <svg class="mt-auto" width="15" height="17"><path d="M4 6l3.500 4.500L11 6" fill="none" stroke="#505050" stroke-width="2"/></svg>
      </div>
    </div>
  </section>
</div>
<div class="h-[1px] bg-[#333]"></div>

<script>
const NS = 'http://www.w3.org/2000/svg';
const $ = id => document.getElementById(id);
function add(parent, tag, attrs, text) {
  const e = document.createElementNS(NS, tag);
  for (const k in attrs) e.setAttribute(k, attrs[k]);
  if (text !== undefined) e.textContent = text;
  parent.appendChild(e);
  return e;
}

/* stacked bars */
const C = '#00ffff', G = '#9acd32', R = '#cd5c5c';
[['2015', [[22, C]]], ['2016', [[26, G]]], ['2017', [[26, C]]],
 ['2018', [[18, R], [16, R], [13, G]]], ['2019', [[11, C], [18, C], [11, R]]],
 ['2020', [[16, G], [11, C], [26, R], [18, C]]]].forEach(([year, parts], i) => {
  let base = 0; const x = 1259.6 + i * 86.5;
  parts.forEach(([v, c]) => {
    add($('bars'), 'rect', {x, y: 448 - (base + v) * 2.826, width: 69.6, height: v * 2.826, fill: c});
    base += v;
  });
  add($('bars'), 'text', {x: x + 34.8, y: 461, 'text-anchor': 'middle', stroke: 'none'}, year);
});

/* pie */
let a0 = 0;
[[6 / 13, C], [3 / 13, G], [4 / 13, R]].forEach(([f, c]) => {
  const a1 = a0 + f * 2 * Math.PI, r = 105.7, cx = 1481, cy = 773.5;
  add($('pie'), 'path', {d: `M${cx} ${cy}L${cx + r * Math.sin(a0)} ${cy - r * Math.cos(a0)}A${r} ${r} 0 0 1 ${cx + r * Math.sin(a1)} ${cy - r * Math.cos(a1)}z`, fill: c});
  a0 = a1;
});

/* streets: width, then x,y pairs */
const streets = [
 [14,352,116,420,178,445,190,498,205,525,225,555,270,580,313,603,350],
 [12,530,224,623,257,700,280,750,289,843,307,907,320,950,343],
 [19,603,350,640,433,673,510,700,567,747,640,767,700,820,800,857,873,883,947,890,968],
 [12,350,272,383,281,460,307,540,329,570,337,590,362],
 [12,522,99,517,147,503,197],[9,453,100,458,127,457,147,445,183,430,185],[9,577,105,563,160,555,187],
 [12,517,101,633,102,683,106,750,111,867,115],[9,865,50,870,83,868,115,877,143,900,149],[9,802,110,807,50],
 [10,563,160,700,165],[9,707,113,693,217],[10,503,180,550,185,647,213,707,230],[8,377,220,363,263],
 [10,460,310,447,377,438,413,432,483,450,510,467,543,480,587,510,653],
 [13,350,385,440,413,530,440,577,450],[11,433,418,357,463],
 [12,352,480,365,510,407,590,413,613,423,643,437,680,460,753,483,820,517,883,540,930,557,968],
 [13,350,600,410,583,477,560,530,543,583,527,637,515],[9,407,597,350,658],
 [11,430,610,470,593,510,603,597,629,687,657,725,664],[10,650,500,637,527,617,577,597,633,567,707],
 [12,510,653,537,687,567,713,623,763,660,807,750,863,770,868,813,880],[10,687,660,620,760],
 [9,350,677,383,697,392,757,363,800],[9,350,787,413,850,450,880,493,907],[8,413,853,483,828],
 [9,620,863,673,913],[13,660,812,570,910],[12,537,919,567,925,633,930,750,907,783,900,813,877,843,827],
 [12,663,807,697,763,737,703],[8,697,763,750,797,783,813,807,803],[8,783,815,770,863],
 [11,770,647,823,550,883,467,913,403,953,350],[11,790,610,940,647,1090,673,1140,687],
 [12,987,587,947,657,918,703,847,827],[13,987,587,1060,510,1138,455],[13,987,588,1043,603,1100,628,1140,637],
 [11,823,547,987,588],[10,827,543,740,513,722,497],[9,877,480,947,507,1023,540],[9,910,430,1060,507],
 [11,783,677,917,702,1073,738,1140,752],[10,1100,628,1080,700,1047,827],[12,1100,625,1140,562],
 [15,857,873,1007,837,1140,808],[7,843,690,833,743,803,757],[7,973,720,960,783,968,790,962,817],[7,1063,520,1097,550],
 [9,920,50,903,107,900,150,890,183,893,237,907,320],[12,1138,148,1113,177,1057,240,963,340],
 [13,955,343,1007,387,1080,450,1110,470],[6,760,968,900,952,1030,930,1138,915],[5,630,50,618,105]];
const bare = [
 [5,817,152,814,190,807,247],[5,817,151,878,158,880,150],[5,812,190,836,193],
 [5,930,57,925,93,970,130,987,130,1033,112,1045,118,1033,150,1013,180,913,320],[5,968,130,1020,53],
 [5,1050,257,1065,273,1085,268],[5,430,870,480,848],[5,445,880,490,858],[5,455,888,492,868],[6,412,357,402,382],[6,510,755,555,722],[6,350,570,400,530]];
let seed = 11;
const rnd = () => (seed = (seed * 16807) % 2147483647) / 2147483647;
const d = s => { let p = 'M'; for (let i = 1; i < s.length; i += 2) p += (i > 1 ? 'L' : '') + s[i] + ' ' + s[i + 1]; return p; };

/* rows of houses along both sides of every street */
let rows = '';
streets.forEach(s => {
  for (let i = 1; i + 3 < s.length; i += 2) {
    const [x1, y1, x2, y2] = s.slice(i, i + 4), L = Math.hypot(x2 - x1, y2 - y1), ux = (x2 - x1) / L, uy = (y2 - y1) / L;
    for (const side of [-1, 1]) {
      const vx = -uy * side, vy = ux * side, o = s[0] / 2 + 4;
      for (let t = 5; t < L - 6;) {
        const w = Math.min(L - t, 10 + rnd() * 14), dep = 16 + rnd() * 15;
        if (rnd() > .1) {
          const q = (a, b) => (x1 + ux * a + vx * b).toFixed(1) + ' ' + (y1 + uy * a + vy * b).toFixed(1);
          const k = w * (.4 + rnd() * .3);
          rows += `M${q(t, o)}L${q(t + w, o)}L${q(t + w, o + dep)}L${q(t + k, o + dep)}L${q(t + k, o + dep - 5 * rnd())}L${q(t, o + dep - 5)}z`;
        }
        t += w;
      }
    }
  }
});
add($('buildings'), 'path', {d: rows});

/* railway */
const rl = $('rails');
[0, 5, 11].forEach((o, i) => add(rl, 'path', {d: `M348 ${806 + o}C395 ${868 + o} 460 ${915 + o} 545 ${929 + o} 640 ${944 + o} 710 ${926 + o} 800 ${904 + o}L1138 ${822 + o}`, stroke: i ? '#8a8a8a' : '#777', 'stroke-width': 2.4, 'stroke-dasharray': '7 2'}));
for (let i = 0; i < 5; i++) add(rl, 'path', {d: `M740 ${932 + i * 6}L960 ${905 + i * 5}L1138 ${838 + i * 13}`, stroke: '#8f8f8f', 'stroke-width': 1.7, 'stroke-dasharray': '8 3'});
for (let i = 0; i < 5; i++) add(rl, 'path', {d: `M${350 + i * 6} ${822 + i * 6}L${362 + i * 16} 968`, stroke: '#bfb3bf', 'stroke-width': 1.4, 'stroke-dasharray': '6 3'});
add(rl, 'path', {d: 'M798 900L1078 838M800 912L1078 848', stroke: '#9b9b9b', 'stroke-width': 5, opacity: .8});

const st = $('streets');
streets.forEach(s => add(st, 'path', {d: d(s), stroke: '#f58a80', 'stroke-width': s[0] + 5, 'stroke-dasharray': '2 1.8', 'stroke-linecap': 'butt'}));
streets.forEach(s => add(st, 'path', {d: d(s), stroke: '#e2dedc', 'stroke-width': s[0] + 3}));
bare.forEach(s => add(st, 'path', {d: d(s), stroke: '#cfcfcf', 'stroke-width': s[0] + 1}));
streets.concat(bare).forEach(s => add(st, 'path', {d: d(s), stroke: '#fff', 'stroke-width': s[0]}));

/* house numbers; coordinates are thirds of a pixel from the given origin */
function numbers(ox, oy, list) {
  list.split(';').forEach(n => { const [t, x, y] = n.split(','); add($('numbers'), 'text', {x: ox + x / 3, y: oy + y / 3 + 3}, t); });
}
numbers(350, 50, '148,25,198;144,72,243;19,305,180;13,310,222;11,303,256;9,298,289;8,328,289;271/C,110,335;271,140,362;3,262,353;4,308,365;263,150,428;93 R,215,418;38 R,343,428;25,268,480;259,424,515;9,62,525;7,50,553;3,42,582;6,70,582;11,42,688;2/G,268,725;61 R,560,155;79,608,157;9,487,175;22 R,690,182;3230,922,128;12 R,1050,147;20,1100,150;16,1168,156;9 R,1160,193;7,482,240;3,450,353;5 R,442,380;76,511,373;8 R,478,418;53 R,530,414;34/N R,480,452;30 R,706,309;12,760,311;8/A R,968,325;12,1095,352;10,1134,376;8,1074,429;6,1127,435;60,935,488;56,993,504;51,935,534;49,1011,534;43,1069,548;34/E R,563,515;25,497,558;21/D,515,594;21,538,629;20,605,594;22 R,607,622;122,722,582;255,691,612;249,755,636;243,834,661;120,845,622;118/C,907,638;118/B,1001,663;231,950,702;227,1008,708;15 R,564,675;18/B R,645,694;18 R,664,736;2,557,796;13,609,795;10,752,819;34,341,829;6/F,541,886;6/E,527,921;6/G,580,931;6/M,607,967;6/D,480,1055;6/C,597,1125;17/B,275,918;17,266,956;28,310,986;21,222,981;30,84,975;27,119,1072;2,184,1116;1,180,1161;5,130,1191;6 R,31,1216;9/A,45,1247;11/A,226,1198;11/3,140,1244;9/C,215,1258;11/1,135,1294;9,198,1294;20,265,1294;7/D,224,1332;7,232,1360;2 R,312,1347;34,903,870;32,955,883;36 R,1000,891;29,860,908;27,897,915;25,935,925;21,990,937;12,1085,846;15,1028,858;5,997,985;6,1020,1051;9 R,955,1069;1,947,1097;4 R,1015,1082;6 R,811,1020;2/A,842,1080');
numbers(740, 50, '1,167,23;1/A,131,84;2 R,239,78;3 R,375,99;2,400,147;1 R,148,136;2,189,132;8,231,167;6,269,167;4,308,167;2,348,167;47,53,196;7,152,203;57,42,243;5,369,258;3,420,295;1,448,300;6,482,300;3 R,463,214;1 R,455,253;5,455,352;2,480,362;191,346,810;187,397,822;185,451,828;116,521,810;32/C R,567,840;3,540,884;39,991,478;42,1033,488;35,957,515;38,1011,515;31/A,924,555;36,975,555;27,889,590;34,947,590;23,851,620;28,918,620;21,840,648;26,887,655;17,788,692;20,862,684;15,770,727;16,833,715;13,744,753;8,775,777;9,710,792;6,750,807;5,681,825;4,712,848;2,688,886;7,232,840;16,265,846;3,222,888;14,262,884;1,214,927;8,242,946;2,236,972;3 R,348,987;1,380,970;9,299,1068;68,261,1255;76/A,160,1273;68 R,74,1313;26 R,131,1318;6,603,1011;8,567,1068;18 R,550,1098;21,521,1172;14 R,580,1157;19,561,1192;157,921,1123;151,963,1160;145,1016,1202;35/A,1010,1284;6,877,1300;4,907,1313;3,847,1328;1,873,1342;4 R,948,1333;17,478,1346;71,1180,1356;7 R,920,1375');
numbers(350, 500, '7,233,10;10,314,27;7/A R,288,50;5 R,328,146;2,366,135;26,417,147;31,410,193;28,452,266;20,27,207;2,130,325;1,153,360;29,227,345;81,419,345;79,439,396;15,126,429;57,212,471;74,250,471;53,219,498;72,274,514;24,79,538;38,527,488;22,528,292;20,564,304;14,628,316;10,679,337;2 R,779,369;19 R,490,524;34,579,542;71/A,535,569;19/B R,585,658;63,567,711;63/A,538,738;63/B,491,776;19/B R,255,588;19 R,263,616;60/2,295,645;37A,294,703;52/A,381,711;8/E R,391,738;10,202,747;46,384,819;4,66,868;23/C,368,928;4,138,988;2,172,1003;8,233,1018;16 R,278,1003;32/D,591,1008;32/C,541,1043;26,530,1160;17,501,1189;3,663,1206;7,693,1173;90,715,1257;86 84,830,1265;9,794,1064;14,892,1030;10,867,1059;41,981,992;2,987,1227;14,914,890;11,957,873;20,1006,880;18,987,910;21,1011,785;13 R,996,812;7,1067,834;6,1161,846;3,1173,900;27,1070,694;30,1140,662;28,1019,522;2,1064,450;7 R,1048,490;3,1177,626;2,866,744;3,832,62;2,908,90;11,1099,58;13,1001,173;9,1018,208;1,1098,366;3 R,580,1364');
numbers(740, 500, '17,272,64;7,90,205;6 R,344,92;8,297,176;66,439,144;52,513,170;50,559,184;48,602,196;46,645,212;47,405,185;43,478,209;41,520,222;23,735,216;21,685,291;42/A,819,266;8 R,897,293;32,996,326;33,800,337;29,858,333;27,904,350;23,977,373;24,735,333;20,713,364;28,592,423;19,681,471;17,582,494;15,565,524;36,515,566;24 R,599,599;36,1098,484;26,1069,534;6 R,1126,610;18,1029,679;14/A,986,782;12,979,815;7,942,774;5,927,831;8,966,859;3,914,882;4,957,898;23 R,924,30;17 R,898,60;29,869,91;30,924,94;42,1009,80;34,1015,117;36/A,1055,153;24/A,868,156;9 R,814,154;1 R,789,182;3 R,806,127;9,138,448;3,275,640;8,308,671;1,265,703;6,303,704;4,297,741;2,259,759;16,155,665;19,90,674;17,107,704;12,182,717;13,129,748;5,190,873;6,252,859;4,270,887;2,287,920;1,359,863;2,678,717;4,672,750;3,694,758;6,661,800;5,686,793;2 R,654,835;8 R,631,866;9,694,856;11,685,895;8/B,621,906;12,657,935;2/C,58,888;2/A,104,916;5,152,921;1 R,97,954;8,160,965;5 R,103,982;4,138,995;1,90,1012;2,121,1037;2 R,128,1141;4,389,1061;54,860,983;4 R,995,950;50,1043,942;18,414,1240;43,834,1345;42,785,1352;69,536,1395;65 59,608,1388');

/* street names between two points, scaled to fit */
function name(g, t, x1, y1, x2, y2, extra) {
  const L = Math.hypot(x2 - x1, y2 - y1), e = add($(g), 'text', {'font-size': 10, ...extra}, t);
  e.setAttribute('font-size', (10 * L / e.getComputedTextLength()).toFixed(2));
  e.setAttribute('transform', `translate(${x1} ${y1}) rotate(${Math.atan2(y2 - y1, x2 - x1) * 180 / Math.PI})`);
}
[['Via Michele Mercati',601,104,681,109],['Via Marcello Malpighi',585,169,675,173],['Via Celso',514,167,523,130],['Via Galeno',565,167,574,122],
 ['Via Lazzaro Spallanzani',698,215,709,119],['Via Pierandrea Mattioli',553,191,645,216],['Via Carlo Pisacane',467,313,541,330],
 ['Via Angiolo Tavanti',563,356,605,422],['Via Riguccio Galluzzi',449,418,530,443],['Riguccio Galluzzi',340,382,406,403],['Via Filippo Corridoni',357,492,396,567],
 ['Via Vittorio Emanuele Secondo',717,290,843,311],['Via dei Cappuccini',890,223,902,299],['Via dei Cappu',907,103,924,53],
 ['Via Pompeo Neri',516,550,582,528],['Via Enrico Mayer',509,606,575,625],['Via Enrico Mayer',612,637,679,653],['Via Scipione de\' Ricci',574,709,600,631],
 ['Via Scipione de\' Ricci',611,615,641,535],['Via Antonio Zobi',639,737,678,682],['Via Gaetano Milanesi',572,720,631,782],['Via Gaetano Mi',695,834,751,859],['Milanesi',742,858,774,871],
 ['Via Scipio Slataper',380,691,387,765],['Via del Romito',452,745,475,801],['o Sighele',350,790,373,814],
 ['Via Egisto Fabbri',619,866,669,914],['Via Giuseppe Richa',650,927,728,914],['Via Antonio Locatelli',343,676,394,618],['Mandaria',341,607,378,597],
 ['Via Francesco Gianni',694,548,738,624],['Via Giovanni Fabbroni',727,508,815,536],['Via Atto Vannucci',779,629,824,548],
 ['Via Gaspero Barbera',830,622,912,643],['Via Gaspero Barbera',976,654,1060,672],['Via Raffaello Lambruschini',791,681,899,703],['Via Raffaello Lambruschini',942,712,1050,735],
 ['Via Raffaello',1087,743,1137,753],['Via Gianfrancesco Pagnini',857,818,908,727],['Via Ferdinando Paoletti',1073,732,1096,640],['Via Ferdinan',1111,611,1140,570],
 ['Viale Giovanni Lami',924,861,1004,842],['Viale dei Cado',1037,942,1098,931],['Via Alfredo Oriani',951,456,1017,486],['Piazza Pietro Leopoldo',661,445,720,500],['omo Solaro Bandini',745,446,815,412]]
 .forEach(a => name('names', ...a));
name('names', 'Bologna-Firenze (direttissima)', 868, 905, 990, 877, {fill: '#888', 'stroke-opacity': .5});
name('names', 'nze (direttissima)', 350, 833, 402, 880, {fill: '#888', 'stroke-opacity': .5});
name('names', 'Linea T3', 737, 665, 752, 695, {fill: '#777'});
name('names', 'zzoni', 353, 170, 366, 155);

/* places */
const blue = '#4f7fe0', navy = '#5058b8';
[['Poggetto',465,216,navy],['Pisacane',408,298,navy],['Coop',512,387,'#b53bb0'],['Galluzzi',540,450,blue],['T1 Leopoldo',541,460,blue],['Leopoldo',657,494,navy],
 ['Poggetto',703,115,'#777',11],['Mercati',842,130,blue],['Convento',848,199,'#666'],['dei Cappuccini',848,210,'#666'],['Bike sharing',944,372,blue],['Giorgini',991,383,blue],['Giorgini',875,411,blue],
 ['Vittorio',1004,402,blue],['Emanuele',1004,411,blue],['Neri T1',588,540,blue],['Leopoldo',588,550,blue],['Romito',416,640,blue],['Tanucci',416,649,blue],
 ['Romito',497,873,blue],['Richa',497,882,blue],['Bonaini',598,905,blue],['Romito',543,920,'#777',10.5],['Impresa',750,559,'#777'],['Rossi',750,570,'#777'],['Luigi',750,580,'#777'],['srl',747,591,'#777'],
 ['Fabbroni',927,589,blue],['Pagnini',927,599,blue],['Leopoldo',1005,748,blue],['Muratori',820,821,navy],['- Stazione',820,831,navy],['Statuto',820,840,navy],
 ['Zanobi',1082,507,'#c8323c'],['Chie',1129,674,navy],['Immac',1126,683,navy],['Conce',1127,693,navy]]
 .forEach(([t, x, y, c, s]) => add($('places'), 'text', {x, y, fill: c, 'font-size': s || 9}, t));
[['Firenze',846,911],['Statuto',846,921]].forEach(([t, x, y]) => add($('places'), 'text', {x, y, fill: navy, 'font-weight': 700}, t));
[['Scuola',631,660,'#66682c'],['Primaria',631,670,'#66682c'],['Guglielmo',631,679,'#66682c'],['Marconi',631,688,'#66682c'],['AYFJ Ashtanga',836,449,'#2f8f3a'],['Yoga Firenze',836,459,'#2f8f3a']]
 .forEach(([t, x, y, c]) => add($('places'), 'text', {x, y, fill: c, 'font-style': 'italic', 'font-size': 8.5}, t));

/* traffic lights */
'372,146;382,145;426,177;437,182;445,190;516,216;532,232;362,263;378,277;555,330;579,322;588,363;598,358;419,403;441,403;446,412;434,430;623,438;634,427;645,446;632,453;401,574;415,579;398,587;407,591;463,563;477,558;665,506;679,540;677,507;728,634;738,629;733,651;749,643;774,690;767,710;757,700;777,704;800,777;811,770;845,836;851,833;660,818;667,806;567,914;572,923;541,932;896,307;938,350;957,344;962,355'
 .split(';').forEach(p => { const [x, y] = p.split(',').map(Number); add($('signals'), 'path', {d: `M${x - 1.8} ${y - 4.500}h3.600v9h-3.600zM${x - 1.800} ${y - 1.500}h3.600M${x - 1.800} ${y + 1.500}h3.600`, fill: '#eee'}); });

/* direction arrows */
'522,105,-90;450,160,105;627,160,180;684,170,0;558,173,100;543,186,0;392,282,195;455,337,-82;378,449,155;438,494,-120;607,375,-125;502,551,-15;497,598,15;385,591,-15;436,683,85;513,655,-120;687,654,10;627,748,140;640,791,-135;703,751,-60;722,779,205;480,830,-10;484,820,70;380,772,-60;612,870,-50;600,926,180;745,907,175;816,615,12;1072,671,10;824,558,-60;911,718,-65;842,702,-85;804,760,-115;796,765,65;803,809,-15;786,871,190;1013,838,172;1117,814,-15;1050,806,100;867,55,90;904,110,-85;732,119,0'
 .split(';').forEach(p => { const [x, y, a] = p.split(','); add($('signals'), 'path', {d: 'M-4.500 0H2M1.500-1.800L5 0 1.500 1.800z', fill: '#333', transform: `translate(${x} ${y}) rotate(${a})`}); });

/* point symbols */
const pins = $('pins');
'505,146;495,190;452,188;387,435;402,438;584,312;645,428;394,577;418,593;398,597;461,826;472,823;585,642;707,351;789,104;819,427;890,361;941,394;922,425;1006,569;1050,603;1113,614;955,658;781,889;716,688;713,676'
 .split(';').forEach(p => { const [cx, cy] = p.split(','); add(pins, 'circle', {cx, cy, r: 1.5, fill: '#c9740d'}); });
'405,563;429,566;437,564;453,557;408,619;406,608;436,613;492,583;538,698;542,701;547,706;562,719;567,723;595,723;588,744;614,744;639,631;676,778;695,824;664,827;715,718;716,711;720,696;712,670;755,630;764,631;1040,539;1042,548;1078,631;1084,641;1114,620;1122,627;1128,629;1125,642;952,664;943,680;937,688;933,715;796,781;882,880;904,875;1066,831;1084,828;1101,823;1116,820;766,876;662,431;717,464;727,482;809,463;945,341;906,945;912,945'
 .split(';').forEach(p => { const [cx, cy] = p.split(','); add(pins, 'circle', {cx, cy, r: 1.5, fill: '#ac39ac'}); });
'525,118;710,281;842,116;539,437;1004,388;991,370;463,531;416,626;512,640;498,859;598,891;723,731;927,575;961,626;1060,607;895,858;1126,107;591,525'
 .split(';').forEach(p => { const [x, y] = p.split(',').map(Number); add(pins, 'path', {d: `M${x - 3} ${y - 3.500}h6v6h-6zM${x - 3} ${y}h6M${x - 2} ${y + 2.500}v1.500M${x + 2} ${y + 2.500}v1.500`, fill: '#cfeafc', stroke: '#0092da', 'stroke-width': 1.3}); });
[[464,200],[408,283],[657,480],[819,806],[846,897]].forEach(([x, y]) => add(pins, 'rect', {x: x - 2.500, y: y - 2.500, width: 5, height: 5, fill: '#7981b0'}));
[[565,347],[595,339],[456,878],[832,877]].forEach(([x, y]) => add(pins, 'text', {x: x - 4, y: y, 'font-size': 13, 'font-weight': 600, fill: '#0092da'}, 'P'));
const paw = (x, y, k, c) => add(pins, 'path', {transform: `translate(${x} ${y}) scale(${k})`, fill: c, d: 'M0-1C3-1 5 5 3 6 1 7-1 7-3 6-5 5-3-1 0-1zM-2-6a1.600 2 0 1 0 .1 0zM2-6a1.600 2 0 1 0 .1 0zM-5-3a1.400 1.800 0 1 0 .1 0zM5-3a1.400 1.800 0 1 0 .1 0z'});
paw(478, 283, 1, '#128024');
[[455,252],[482,252],[469,265],[494,265],[456,278],[469,291],[495,291]].forEach(([x, y]) => paw(x, y, .65, '#a9dfae'));
add(pins, 'path', {d: 'M408 313l3 3-2 3M418 316l-3 4 3 1M412 319h3', stroke: '#128024', 'stroke-width': 2, fill: 'none'});
add(pins, 'path', {d: 'M506 368l2 1 2 6h8l1-5h-10M510 377.500h7', stroke: '#b53bb0', 'stroke-width': 1.6, fill: 'none'});
add(pins, 'path', {d: 'M550 672l2 1 2 6h6l1-5h-8M554 681h6', stroke: '#b53bb0', 'stroke-width': 1.6, fill: 'none'});
add(pins, 'path', {d: 'M616 314.500h11v9h-11zM618.500 314v10M624.500 314v10M618 319h7', stroke: '#734a08', 'stroke-width': 1.5, fill: 'none'});
add(pins, 'path', {d: 'M577 630h11v8h-11zM820 886h11v8h-11zM446 599h11v7h-11z', fill: '#734a08'});
add(pins, 'path', {d: 'M577 631l5.500 4 5.500-4M820 887l5.500 4 5.500-4', stroke: '#fff', fill: 'none'});
add(pins, 'circle', {cx: 451.5, cy: 602.5, r: 2, fill: '#d9d0c9'});
add(pins, 'path', {d: 'M436 580h6l-1 7h-4zM439 579v-3h4M902 384h5l-1 6h-3zM905 383l3-4 3 1', stroke: '#734a08', 'stroke-width': 1.3, fill: '#b08a50'});
add(pins, 'path', {d: 'M797 556c3-1 5 0 6 1 1-1 3-2 6-1v7c-3-1-5 0-6 1-1-1-3-2-6-1z', fill: '#b3986c'});
add(pins, 'path', {d: 'M875 216v11M871.500 219.500h7M1135 651v12M1131 655h7', stroke: '#000', 'stroke-width': 1.8});
add(pins, 'path', {d: 'M472 590h8v8h-8zM474 588h4v2h-4zM1079 487h8v8h-8zM1081 484h4v2h-4z', fill: '#c8323c'});
add(pins, 'path', {d: 'M476 591.500v5M473.500 594h5M1083 488.500v5M1080.500 491h5', stroke: '#fff', 'stroke-width': 1.3});
add(pins, 'path', {d: 'M496 840h6v9h-6zM503 842l2 2v5M825 855h6v9h-6zM832 856l2 2v5M598 436h6v7h-6z', fill: '#0092da', stroke: '#0092da'});
add(pins, 'path', {d: 'M630 812v9M640 812v9M630 814h10M630 819h10M633 812v9M637 812v9M1000 734v6M1000 737h11v3M551 692h5l3 5M553 698h5', stroke: '#0092da', 'stroke-width': 1.5, fill: 'none'});
add(pins, 'path', {d: 'M509 850l1.500-4h4l1.500 4v4h-7z', fill: '#734a08'});
add(pins, 'text', {x: 717, y: 479, 'font-size': 12, fill: '#8a6425'}, '@');
add(pins, 'path', {d: 'M1130 811h8M1134 811v10M1131 821h7', stroke: '#ac39ac', 'stroke-width': 2});

/* work areas with a feathered inner border */
[['a1', 'M230 370L352 377 460 381 503 438 524 517 504 677H230z'],
 ['a2', 'M650 305L770 288 840 323 913 403 883 510 853 586 790 601H648L602 563 580 500 567 458 592 352z'],
 ['a3', 'M967 182L1260 170V465H1007L960 413 943 252z']].forEach(([id, p]) => {
  const z = $('zones');
  add(add(z, 'clipPath', {id}), 'path', {d: p});
  const g = add(z, 'g', {'clip-path': `url(#${id})`});
  add(g, 'path', {d: p, fill: 'none', stroke: '#e6eff7', 'stroke-opacity': .7, 'stroke-width': 72, filter: 'url(#blur)'});
  add(g, 'path', {d: p, fill: 'none', stroke: '#1f78b4', 'stroke-opacity': .95, 'stroke-width': 26, filter: 'url(#blur)'});
  add(g, 'path', {d: p, fill: 'none', stroke: '#1f78b4', 'stroke-opacity': .75, 'stroke-width': 12, filter: 'url(#soft)'});
});
const soft = add(document.querySelector('#map defs'), 'filter', {id: 'soft'});
add(soft, 'feGaussianBlur', {stdDeviation: 5});
const lbl = add(document.querySelector('#map defs'), 'filter', {id: 'lbl', x: '-20%', y: '-50%', width: '140%', height: '220%'});
add(lbl, 'feDropShadow', {dx: 1.5, dy: 2, stdDeviation: 1.5, 'flood-opacity': .6});

/* road labels above the work areas, set along paths */
function along(id, path, t, size) {
  add(document.querySelector('#map defs'), 'path', {id, d: path});
  const e = add($('tops'), 'text', {'font-size': size});
  add(e, 'textPath', {href: '#' + id, textLength: (document.getElementById(id).getTotalLength() - 2).toFixed(1)}, t);
}
along('r1', 'M630 347Q720 362 807 384', 'Via Giandomenico Romagnosi', 12.5);
along('r2', 'M593 466Q602 500 628 512 660 528 704 522', 'Piazza Pietro Leopoldo', 12.5);
along('r3', 'M893 456L948 364', 'Via Atto Vannucci', 12.3);
along('r4', 'M893 491Q950 508 1017 540', 'Via Celestino Bianchi', 12.5);
along('r5', 'M851 546Q915 565 979 587', 'Via Giovanni Fabbroni', 12.5);
</script>
</body>
</html>
